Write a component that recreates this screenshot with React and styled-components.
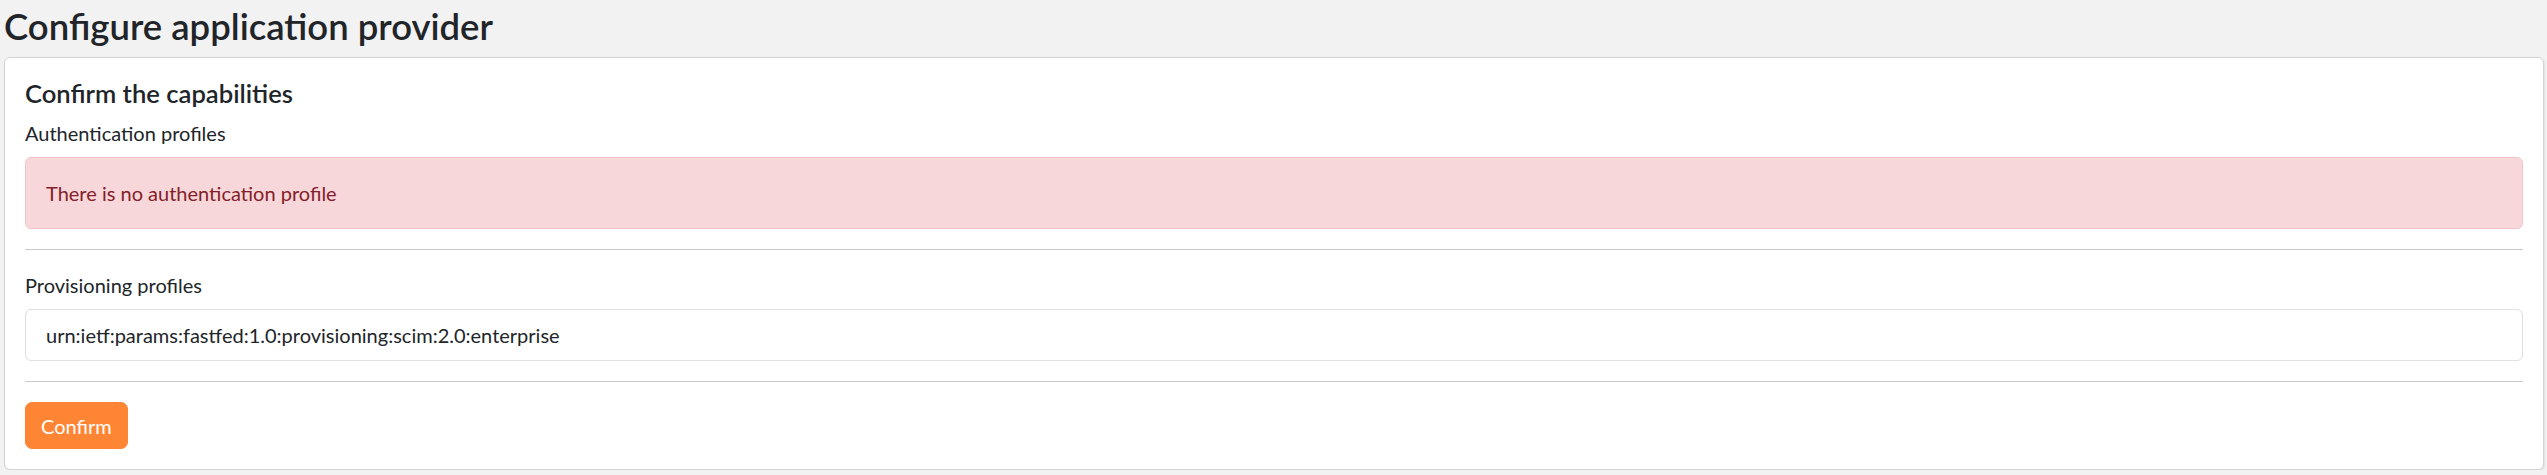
import React from "react";
import styled, { createGlobalStyle } from "styled-components";

const GlobalStyle = createGlobalStyle`
  * { box-sizing: border-box; }
  body {
    margin: 0;
    background: #f2f2f2;
    color: #212529;
    font-family: Lato, "Open Sans", sans-serif;
    font-size: 20px;
    line-height: 30px;
  }
`;

const Page = styled.div`
  padding: 5px 3px 0 4px;
`;

const Title = styled.h3`
  margin: 0 0 10px;
  font-size: 36.5px;
  font-weight: 600;
  line-height: 42px;
`;

const Card = styled.div`
  background: #fff;
  border: 1px solid #d3d3d3;
  border-radius: 6px;
  box-shadow: 1px 1px 2px rgba(0, 0, 0, 0.08);
  padding: 20px;
`;

const CardTitle = styled.h5`
  margin: 0 0 10px;
  font-size: 25.6px;
  font-weight: 600;
  line-height: 30px;
`;

const Label = styled.div`
  margin-bottom: 9px;
`;

const Alert = styled.div`
  background: #f8d7da;
  border: 1px solid #f5c2c7;
  color: #842029;
  border-radius: 6px;
  padding: 20px;
  margin-bottom: 20px;
`;

const Divider = styled.hr`
  margin: 20px 0;
  border: 0;
  border-top: 1px solid #c8c9ca;
`;

const List = styled.ul`
  list-style: none;
  margin: 0;
  padding: 0;
`;

const Item = styled.li`
  border: 1px solid #dfdfdf;
  border-radius: 6px;
  padding: 10px 20px;
`;

const Button = styled.button`
  font-family: inherit;
  font-size: 20px;
  line-height: 30px;
  color: #fff;
  background: #fe8533;
  border: 1px solid #fe8533;
  border-radius: 7px;
  padding: 7.5px 15px;
  cursor: pointer;
`;

export default function App() {
  return (
    <>
      <GlobalStyle />
      <Page>
        <Title>Configure application provider</Title>
        <Card>
          <CardTitle>Confirm the capabilities</CardTitle>
          <Label>Authentication profiles</Label>
          <Alert>There is no authentication profile</Alert>
          <Divider />
          <Label>Provisioning profiles</Label>
          <List>
            <Item>urn:ietf:params:fastfed:1.0:provisioning:scim:2.0:enterprise</Item>
          </List>
          <Divider />
          <Button>Confirm</Button>
        </Card>
      </Page>
    </>
  );
}
